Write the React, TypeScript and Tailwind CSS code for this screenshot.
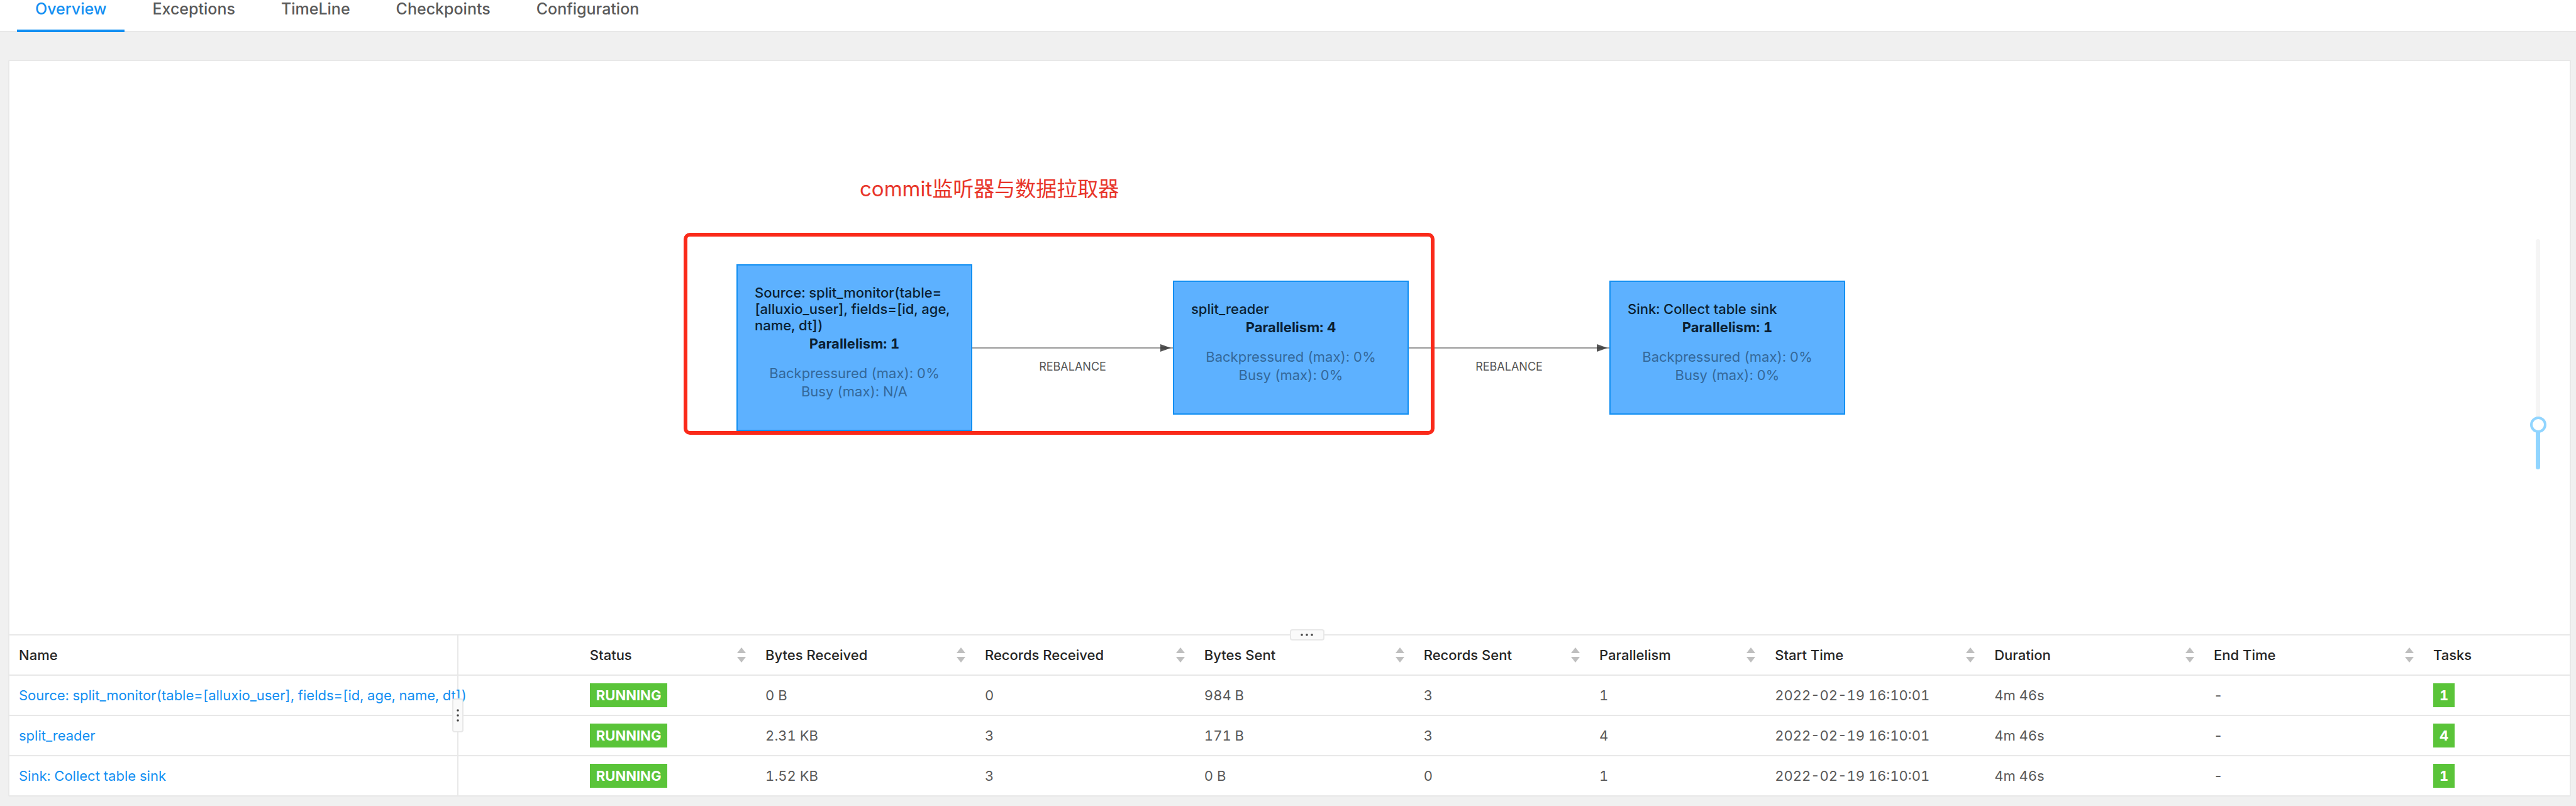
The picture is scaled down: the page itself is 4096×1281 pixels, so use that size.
import React from "react";

const tabs = ["Overview", "Exceptions", "TimeLine", "Checkpoints", "Configuration"];

type VertexProps = {
  title: string[];
  parallelism: number;
  busy: string;
};

function Vertex({ title, parallelism, busy }: VertexProps) {
  return (
    <div className="w-[375px] shrink-0 border-2 border-[#128ff2] bg-[#5db1ff] px-[27px] pt-[30px] pb-[46px] text-[22px] leading-[29px] text-[#0b1f33]">
      <h3 className="pb-[2px] font-medium leading-[26px] whitespace-nowrap">
        {title.map((line) => (
          <span key={line} className="block">
            {line}
          </span>
        ))}
      </h3>
      <p className="text-center font-bold">Parallelism: {parallelism}</p>
      <p className="mt-[18px] text-center text-[#34689a]">Backpressured (max): 0%</p>
      <p className="text-center text-[#34689a]">Busy (max): {busy}</p>
    </div>
  );
}

function Edge({ label }: { label: string }) {
  return (
    <div className="relative w-[319px] shrink-0">
      <svg className="block h-3 w-full" viewBox="0 0 319 12" aria-hidden="true">
        <path d="M299 0L316 6L299 12Z" fill="#555" />
        <path d="M0 6H319" stroke="#333" strokeOpacity="0.5" strokeWidth="2" />
      </svg>
      <span className="absolute inset-x-0 top-6 text-center text-lg leading-6 text-[#555]">{label}</span>
    </div>
  );
}

function Sorter({ label }: { label: string }) {
  return (
    <button type="button" aria-label={`Sort by ${label}`} className="flex">
      <svg className="h-6 w-[14px]" viewBox="0 0 14 24" fill="#bfbfbf" aria-hidden="true">
        <path d="M7 0L14 9H0Z" />
        <path d="M0 15H14L7 24Z" />
      </svg>
    </button>
  );
}

const columns = [
  { label: "Name", width: "w-[22.3%]", sortable: false },
  { label: "Status", width: "w-[6.86%]", sortable: true },
  { label: "Bytes Received", width: "w-[8.57%]", sortable: true },
  { label: "Records Received", width: "w-[8.57%]", sortable: true },
  { label: "Bytes Sent", width: "w-[8.57%]", sortable: true },
  { label: "Records Sent", width: "w-[6.86%]", sortable: true },
  { label: "Parallelism", width: "w-[6.86%]", sortable: true },
  { label: "Start Time", width: "w-[8.57%]", sortable: true },
  { label: "Duration", width: "w-[8.57%]", sortable: true },
  { label: "End Time", width: "w-[8.57%]", sortable: true },
  { label: "Tasks", width: "w-[5.7%]", sortable: false },
];

const rows = [
  {
    name: "Source: split_monitor(table=[alluxio_user], fields=[id, age, name, dt])",
    values: ["0 B", "0", "984 B", "3", "1", "2022-02-19 16:10:01", "4m 46s", "-"],
    tasks: 1,
  },
  {
    name: "split_reader",
    values: ["2.31 KB", "3", "171 B", "3", "4", "2022-02-19 16:10:01", "4m 46s", "-"],
    tasks: 4,
  },
  {
    name: "Sink: Collect table sink",
    values: ["1.52 KB", "3", "0 B", "0", "1", "2022-02-19 16:10:01", "4m 46s", "-"],
    tasks: 1,
  },
];

function Badge({ children }: { children: React.ReactNode }) {
  return (
    <span className="inline-block bg-[#5ac439] px-[10px] align-middle font-bold leading-[38px] text-white">
      {children}
    </span>
  );
}

function Dots({ vertical }: { vertical?: boolean }) {
  return vertical ? (
    <svg className="h-5 w-1" viewBox="0 0 4 20" fill="#444" aria-hidden="true">
      <circle cx="2" cy="2" r="1.8" />
      <circle cx="2" cy="10" r="1.8" />
      <circle cx="2" cy="18" r="1.8" />
    </svg>
  ) : (
    <svg className="h-1 w-5" viewBox="0 0 20 4" fill="#444" aria-hidden="true">
      <circle cx="2" cy="2" r="1.8" />
      <circle cx="10" cy="2" r="1.8" />
      <circle cx="18" cy="2" r="1.8" />
    </svg>
  );
}

export default function App() {
  return (
    <div className="flex min-h-screen flex-col bg-[#f0f0f0] font-[Inter,'Noto_Sans_CJK_SC',sans-serif] text-[22px] text-[#595959] tabular-nums">
      <nav className="flex gap-[15px] border-b-2 border-[#e8e8e8] bg-white pl-[27px] text-[25px] font-medium">
        {tabs.map((tab, i) => (
          <a
            key={tab}
            href="#"
            className={
              i === 0
                ? "-mb-[2px] border-b-4 border-[#128ff2] px-[29px] pb-[19px] leading-[28px] text-[#128ff2]"
                : "px-[29px] leading-[28px]"
            }
          >
            {tab}
          </a>
        ))}
      </nav>

      <main className="mt-11 mr-2 mb-[15px] ml-[13px] flex grow flex-col rounded-[2px] border-2 border-[#e8e8e8] bg-white">
        <section aria-label="Job graph" className="relative flex grow items-center justify-center pl-1">
          <div className="relative flex items-center">
            <Vertex
              title={["Source: split_monitor(table=", "[alluxio_user], fields=[id, age,", "name, dt])"]}
              parallelism={1}
              busy="N/A"
            />
            <Edge label="REBALANCE" />
            <Vertex title={["split_reader"]} parallelism={4} busy="0%" />
            <Edge label="REBALANCE" />
            <Vertex title={["Sink: Collect table sink"]} parallelism={1} busy="0%" />
            <div className="absolute -top-[50px] -left-[84px] h-[321px] w-[1194px] rounded-[10px] border-[6px] border-[#fa2a1a]" />
            <p className="absolute -top-[144px] left-[196px] text-[33px] leading-[48px] whitespace-nowrap text-[#e8352a]">
              commit监听器与数据拉取器
            </p>
          </div>
          <input
            type="range"
            aria-label="Zoom"
            defaultValue={17}
            className="absolute top-[283px] right-[38px] h-[366px] w-[26px] appearance-none bg-transparent [direction:rtl] [writing-mode:vertical-lr] [&::-webkit-slider-runnable-track]:h-full [&::-webkit-slider-runnable-track]:w-[7px] [&::-webkit-slider-runnable-track]:rounded [&::-webkit-slider-runnable-track]:bg-[linear-gradient(to_top,#91d5ff_18%,#f5f5f5_18%)] [&::-webkit-slider-thumb]:-ml-[9px] [&::-webkit-slider-thumb]:size-[26px] [&::-webkit-slider-thumb]:appearance-none [&::-webkit-slider-thumb]:rounded-full [&::-webkit-slider-thumb]:border-4 [&::-webkit-slider-thumb]:border-[#91d5ff] [&::-webkit-slider-thumb]:bg-white"
          />
        </section>

        <section aria-label="Subtasks" className="relative border-t-2 border-[#e8e8e8]">
          <div className="absolute inset-y-0 left-[17.5%] w-[2px] bg-[#e8e8e8]" />
          <table className="relative w-full table-fixed border-separate border-spacing-0 text-left [&_td]:border-[#e8e8e8] [&_tr:not(:last-child)>td]:border-b-2">
            <thead>
              <tr className="h-16 text-[#262626]">
                {columns.map((c) => (
                  <th
                    key={c.label}
                    scope="col"
                    className={`${c.width} border-b-2 border-[#e8e8e8] pr-4 pl-[15px] font-medium`}
                  >
                    <div className="flex items-center justify-between whitespace-nowrap">
                      {c.label}
                      {c.sortable && <Sorter label={c.label} />}
                    </div>
                  </th>
                ))}
              </tr>
            </thead>
            <tbody>
              {rows.map((r, i) => (
                <tr key={r.name} className={i < rows.length - 1 ? "h-16" : "h-[62px]"}>
                  <td className="px-[15px] whitespace-nowrap">
                    <a href="#" className="text-[#128ff2]">
                      {r.name}
                    </a>
                  </td>
                  <td className="px-[15px]">
                    <Badge>RUNNING</Badge>
                  </td>
                  {r.values.map((v, k) => (
                    <td key={k} className="px-[15px] whitespace-nowrap">
                      {v}
                    </td>
                  ))}
                  <td className="px-[15px]">
                    <Badge>{r.tasks}</Badge>
                  </td>
                </tr>
              ))}
            </tbody>
          </table>
          <button
            type="button"
            aria-label="Resize name column"
            className="absolute top-1/2 left-[17.5%] flex h-[54px] w-[18px] -translate-x-2 -translate-y-1/2 items-center justify-center rounded border-2 border-[#e8e8e8] bg-[#fafafa]"
          >
            <Dots vertical />
          </button>
          <button
            type="button"
            aria-label="Resize graph"
            className="absolute -top-[10px] left-1/2 flex h-[18px] w-[55px] items-center justify-center rounded border-2 border-[#e8e8e8] bg-[#fafafa]"
          >
            <Dots />
          </button>
        </section>
      </main>
    </div>
  );
}
